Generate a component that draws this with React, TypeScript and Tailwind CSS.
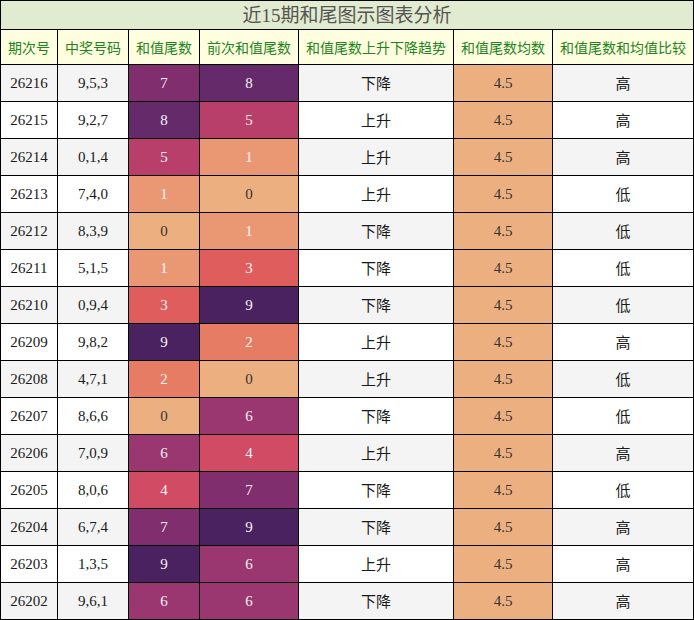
const rows: [string, string, number, number, string, string][] = [
  ["26216", "9,5,3", 7, 8, "下降", "高"],
  ["26215", "9,2,7", 8, 5, "上升", "高"],
  ["26214", "0,1,4", 5, 1, "上升", "高"],
  ["26213", "7,4,0", 1, 0, "上升", "低"],
  ["26212", "8,3,9", 0, 1, "下降", "低"],
  ["26211", "5,1,5", 1, 3, "下降", "低"],
  ["26210", "0,9,4", 3, 9, "下降", "低"],
  ["26209", "9,8,2", 9, 2, "上升", "高"],
  ["26208", "4,7,1", 2, 0, "上升", "低"],
  ["26207", "8,6,6", 0, 6, "下降", "低"],
  ["26206", "7,0,9", 6, 4, "上升", "高"],
  ["26205", "8,0,6", 4, 7, "下降", "低"],
  ["26204", "6,7,4", 7, 9, "下降", "高"],
  ["26203", "1,3,5", 9, 6, "上升", "高"],
  ["26202", "9,6,1", 6, 6, "下降", "高"],
];

// 尾数 -> 色块
const tailColor: Record<number, string> = {
  0: "bg-[#ecb080] text-[#333]",
  1: "bg-[#ea9873] text-[#f5f5f5]",
  2: "bg-[#e77c65] text-[#f5f5f5]",
  3: "bg-[#e05d5e] text-[#f5f5f5]",
  4: "bg-[#d14b65] text-[#f5f5f5]",
  5: "bg-[#b93f6b] text-[#f5f5f5]",
  6: "bg-[#9b3770] text-[#f5f5f5]",
  7: "bg-[#802e6e] text-[#f5f5f5]",
  8: "bg-[#642a6a] text-[#f5f5f5]",
  9: "bg-[#4b2260] text-[#f5f5f5]",
};

const serif = "font-['Liberation_Serif','Noto_Sans_CJK_SC',serif]";
const cjk = "font-['Noto_Sans_CJK_SC',sans-serif]";

const headers = ["期次号", "中奖号码", "和值尾数", "前次和值尾数", "和值尾数上升下降趋势", "和值尾数均数", "和值尾数和均值比较"];
const widths = ["w-[57px]", "w-[71px]", "w-[71px]", "w-[99px]", "w-[155px]", "w-[99px]", "w-[141px]"];

export default function App() {
  return (
    <div className="w-[694px] bg-white">
      <table className="w-[694px] table-fixed border-collapse">
        <colgroup>
          {widths.map((w, i) => (
            <col key={i} className={w} />
          ))}
        </colgroup>
        <thead>
          <tr>
            <th
              colSpan={7}
              className={`h-[29px] border border-black bg-[#e1ebcf] p-0 text-[19px] font-normal leading-[27px] text-[#555] ${serif}`}
            >
              近15期和尾图示图表分析
            </th>
          </tr>
          <tr>
            {headers.map((h) => (
              <th
                key={h}
                className={`h-[35px] whitespace-nowrap border border-black bg-[#ffffe0] p-0 text-[14px] font-normal text-[#1e841e] ${cjk}`}
              >
                {h}
              </th>
            ))}
          </tr>
        </thead>
        <tbody>
          {rows.map(([issue, nums, tail, prev, trend, cmp], i) => {
            const bg = i % 2 === 0 ? "bg-[#f4f4f4]" : "bg-white";
            return (
              <tr key={issue} className="h-[37px]">
                <td className={`border border-black ${bg} p-0 text-center text-[15px] text-[#1a1a1a] ${serif}`}>{issue}</td>
                <td className={`border border-black ${bg} p-0 text-center text-[15px] text-[#1a1a1a] ${serif}`}>{nums}</td>
                <td className={`border border-black ${tailColor[tail]} p-0 text-center text-[15px] ${serif}`}>{tail}</td>
                <td className={`border border-black ${tailColor[prev]} p-0 text-center text-[15px] ${serif}`}>{prev}</td>
                <td className={`border border-black ${bg} p-0 text-center text-[15px] text-[#1a1a1a] ${cjk}`}>{trend}</td>
                <td className={`border border-black bg-[#ecb080] p-0 text-center text-[15px] text-[#333] ${serif}`}>4.5</td>
                <td className={`border border-black ${bg} p-0 text-center text-[15px] text-[#1a1a1a] ${cjk}`}>{cmp}</td>
              </tr>
            );
          })}
        </tbody>
      </table>
    </div>
  );
}
